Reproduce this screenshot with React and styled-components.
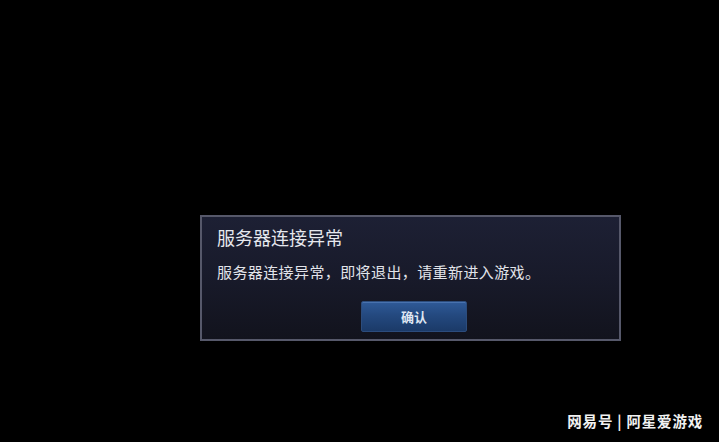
import React from "react";
import styled, { createGlobalStyle } from "styled-components";

const Global = createGlobalStyle`
  html, body { margin: 0; padding: 0; background: #000; }
  body { font-family: "Noto Sans CJK SC", "Noto Sans", sans-serif; }
`;

const Screen = styled.div`
  width: 719px;
  height: 442px;
  background: #000;
  display: flex;
  flex-direction: column;
  box-sizing: border-box;
  padding: 215px 0 0 200px;
  position: relative;
`;

const Dialog = styled.div`
  width: 421px;
  height: 126px;
  box-sizing: border-box;
  border: 2px solid #56586a;
  background: linear-gradient(180deg, #1d2034 0%, #181a2a 50%, #12131d 100%);
  padding: 9px 14px 0 15px;
  display: flex;
  flex-direction: column;
`;

const Title = styled.div`
  color: #e6e8ee;
  font-size: 18px;
  line-height: 22px;
  letter-spacing: 0px;
`;

const Message = styled.div`
  margin-top: 14px;
  color: #e2e4ea;
  font-size: 15px;
  line-height: 20px;
  letter-spacing: 0.4px;
`;

const Actions = styled.div`
  margin-top: 19px;
  display: flex;
  justify-content: flex-start;
  padding-left: 144px;
`;

const Button = styled.button`
  width: 106px;
  height: 31px;
  border: 1px solid #2c4c7c;
  border-radius: 2px;
  background: linear-gradient(180deg, #2f5a98 0%, #24497f 45%, #1b3a68 100%);
  box-shadow: inset 0 1px 0 rgba(120, 160, 220, 0.35);
  color: #dfe6f2;
  font-family: "Noto Sans CJK SC", sans-serif;
  font-size: 13px;
  font-weight: 700;
  padding: 0;
`;

const Watermark = styled.div`
  position: absolute;
  right: 16px;
  bottom: 11px;
  color: #f2f2f2;
  font-size: 14.5px;
  font-weight: 700;
  letter-spacing: 0.8px;
`;

export default function App() {
  return (
    <>
      <Global />
      <Screen>
        <Dialog>
          <Title>服务器连接异常</Title>
          <Message>服务器连接异常，即将退出，请重新进入游戏。</Message>
          <Actions>
            <Button>确认</Button>
          </Actions>
        </Dialog>
        <Watermark>网易号 | 阿星爱游戏</Watermark>
      </Screen>
    </>
  );
}
